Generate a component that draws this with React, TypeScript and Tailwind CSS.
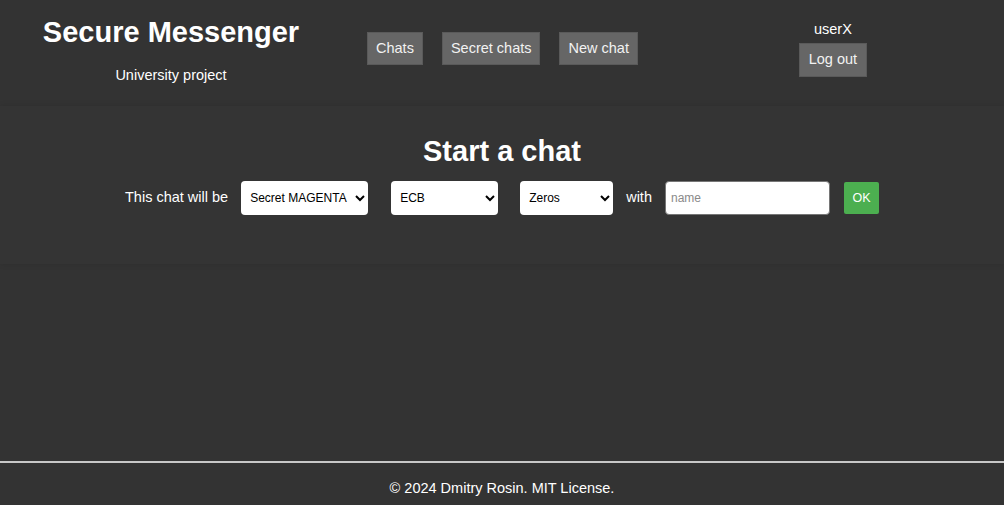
import React from "react";

const navItems = ["Chats", "Secret chats", "New chat"];

const App = () => {
  return (
    <div
      className="min-h-screen flex flex-col bg-[#333333] text-white"
      style={{ fontFamily: '"Liberation Sans", Arial, sans-serif' }}
    >
      {/* Header */}
      <header className="flex items-start h-[100px]">
        <div className="w-[342px] flex flex-col items-center pt-[15px]">
          <h1 className="text-[29px] font-bold leading-[34px]">Secure Messenger</h1>
          <p className="text-[14.5px] mt-[17px] leading-[18px]">University project</p>
        </div>
        <nav className="flex gap-[19px] ml-[25px] mt-[32px]">
          {navItems.map((item) => (
            <button
              key={item}
              className="bg-[#666666] px-[8px] h-[33px] text-[14.5px] text-[#f2f2f2] border border-[#5a5a5a]"
            >
              {item}
            </button>
          ))}
        </nav>
        <div className="ml-[161px] w-[68px] flex flex-col items-center pt-[20px]">
          <span className="text-[14.5px] leading-[18px]">userX</span>
          <button className="mt-[5px] bg-[#666666] w-[68px] h-[34px] text-[14.5px] text-[#f2f2f2] border border-[#5a5a5a]">
            Log out
          </button>
        </div>
      </header>

      {/* Start a chat */}
      <main className="flex-grow">
        <section className="mt-[6px] h-[158px] bg-[#343434] shadow-[0_0_6px_rgba(0,0,0,0.12)] flex flex-col items-center pt-[28px]">
          <h2 className="text-[29px] font-bold leading-[34px]">Start a chat</h2>
          <div className="flex items-center mt-[13px] text-[14.5px]">
            <span className="mr-[13px]">This chat will be</span>
            <select className="w-[127px] h-[34px] bg-white text-black text-[12px] rounded-[4px] pl-[5px] pr-[2px] mr-[23px]">
              <option>Secret MAGENTA</option>
            </select>
            <select className="w-[107px] h-[34px] bg-white text-black text-[12px] rounded-[4px] pl-[5px] pr-[2px] mr-[22px]">
              <option>ECB</option>
            </select>
            <select className="w-[93px] h-[34px] bg-white text-black text-[12px] rounded-[4px] pl-[5px] pr-[2px] mr-[13px]">
              <option>Zeros</option>
            </select>
            <span className="mr-[13px]">with</span>
            <input
              placeholder="name"
              className="w-[165px] h-[34px] bg-white text-black text-[12px] rounded-[4px] px-[5px] border border-[#767676] placeholder:text-[#8a8a8a] mr-[14px]"
            />
            <button className="w-[35px] h-[32px] bg-[#4caf50] text-white text-[12.5px] rounded-[2px]">
              OK
            </button>
          </div>
        </section>
      </main>

      {/* Footer */}
      <footer className="border-t-2 border-[#c8c8c8] h-[44px] flex items-center justify-center pt-[10px]">
        <span className="text-[14.5px]">© 2024 Dmitry Rosin. MIT License.</span>
      </footer>
    </div>
  );
};

export default App;
